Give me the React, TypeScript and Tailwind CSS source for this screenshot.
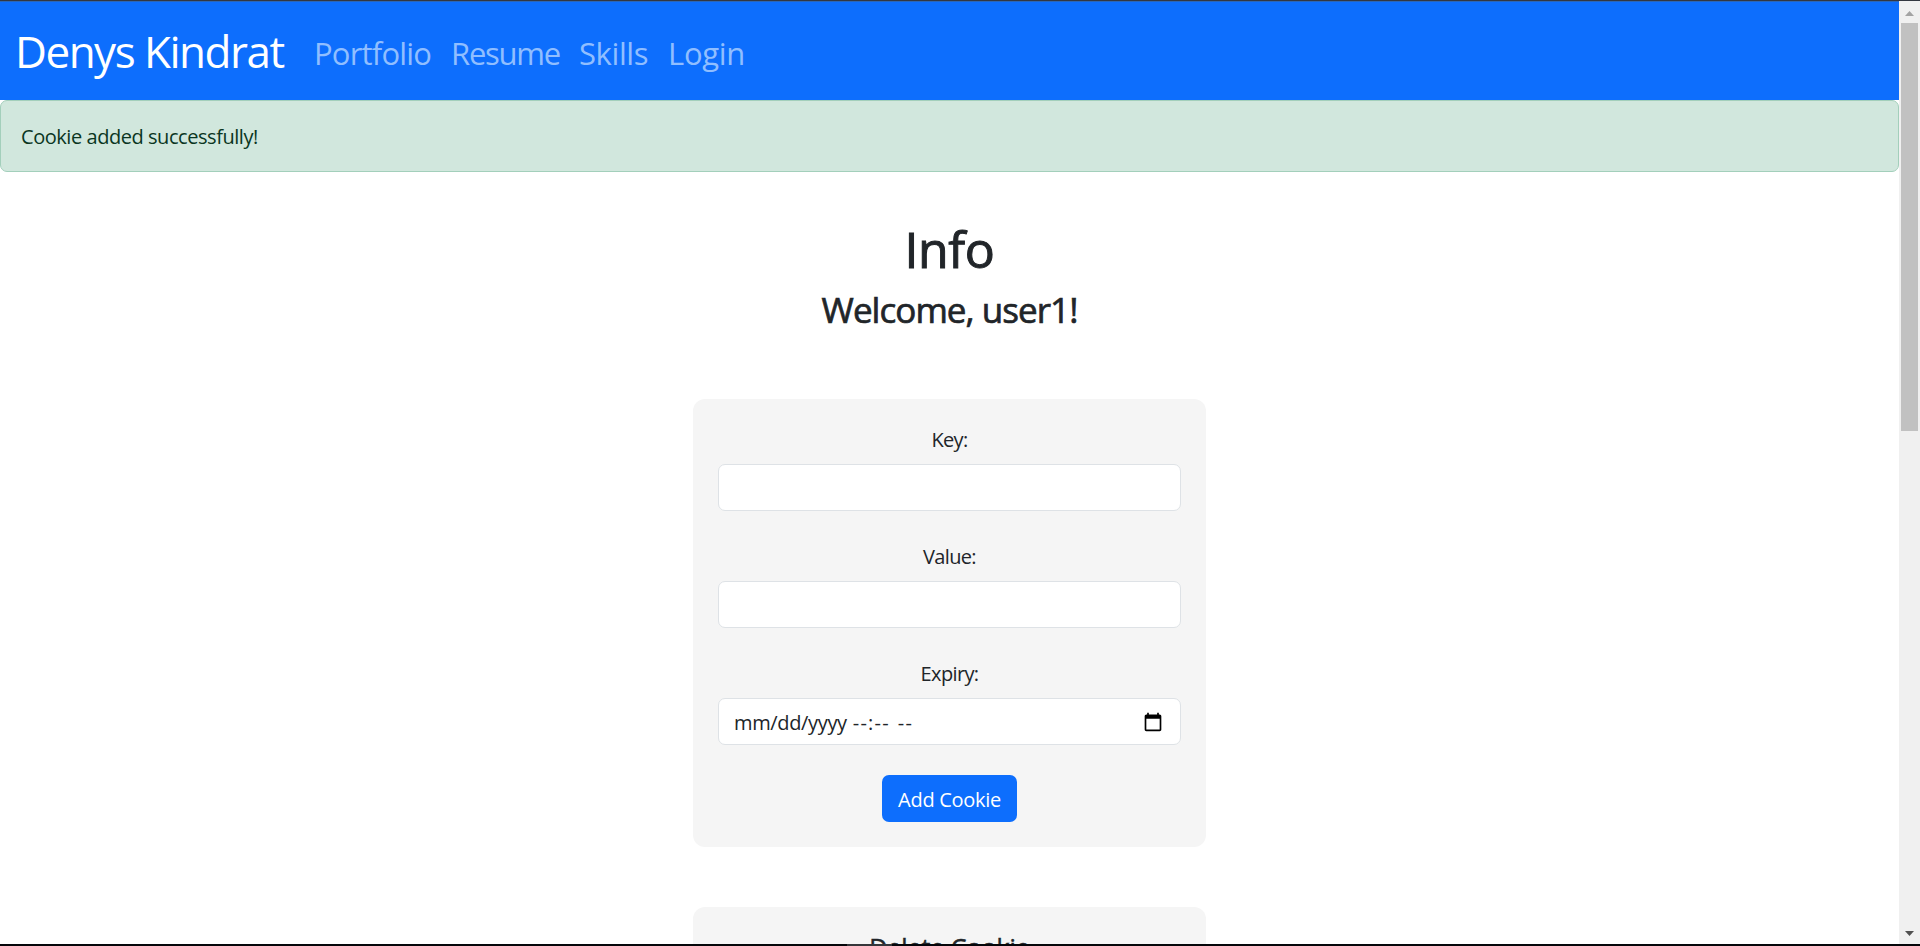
import React from "react";

const links = [
  { label: "Portfolio", cls: "ml-[31px] w-[118px] tracking-[-0.8px]" },
  { label: "Resume", cls: "ml-[19px] w-[110px] tracking-[-1.25px]" },
  { label: "Skills", cls: "ml-[18px] w-[68px] tracking-[-0.4px]" },
  { label: "Login", cls: "ml-[21px] w-[78px] tracking-[-0.3px]" },
];

function Field({ label, children }: { label: string; children?: React.ReactNode }) {
  return (
    <div className="mb-[30px] flex flex-col items-stretch">
      <label className="mb-[9px] mt-px h-[30px] text-center text-[20px] leading-[30px] tracking-[-0.65px]">{label}</label>
      <div className="flex h-[47px] items-center justify-between rounded-[7px] border border-[#dee2e6] bg-white pl-[15px] pr-[17px]">
        {children}
      </div>
    </div>
  );
}

export default function App() {
  return (
    <div className="flex h-[946px] w-[1920px] flex-col overflow-hidden bg-white font-['Open_Sans','Noto_Sans',sans-serif] text-[#212529]">
      <div className="h-px shrink-0 bg-[#333740]" />
      <div className="flex min-h-0 flex-1">
        <main className="flex min-w-0 flex-1 flex-col overflow-hidden">
          <nav className="flex h-[99px] shrink-0 items-center border-t border-[#2b66b8] bg-[#0d6efd] pl-[15px]">
            <a className="w-[268px] whitespace-nowrap text-[44px] leading-[66px] tracking-[-1.5px] text-white">Denys Kindrat</a>
            {links.map((l) => (
              <a key={l.label} className={"whitespace-nowrap pt-[3px] text-[31px] leading-[46px] text-[#90beff] " + l.cls}>
                {l.label}
              </a>
            ))}
          </nav>
          <div className="flex h-[72px] shrink-0 items-center rounded-[7px] border border-[#a3cfbb] bg-[#d1e7dd] px-[20px] pt-[2px] text-[20px] tracking-[-0.45px] text-[#0a3622]">
            Cookie added successfully!
          </div>
          <h1 className="mt-[47px] text-center text-[50px] font-medium leading-[60px] tracking-[-0.4px] [-webkit-text-stroke:1px_#212529]">Info</h1>
          <h2 className="mt-[10px] text-center text-[35px] font-medium leading-[42px] tracking-[-0.95px] [-webkit-text-stroke:0.7px_#212529]">Welcome, user1!</h2>
          <section className="mx-auto mt-[68px] flex h-[448px] w-[513px] shrink-0 flex-col rounded-[12px] bg-[#f5f5f5] px-[25px] pt-[25px]">
            <Field label="Key:" />
            <Field label="Value:" />
            <Field label="Expiry:">
              <span className="flex gap-[6px] pt-[2px] text-[20px] tracking-[-0.35px]">
                <span>mm/dd/yyyy</span>
                <span className="tracking-[1.2px]">--:--</span>
                <span className="ml-[2px] tracking-[1.2px]">--</span>
              </span>
              <svg width="20" height="20" viewBox="0 0 24 24">
                <path d="M20 3h-1V1h-2v2H7V1H5v2H4c-1.1 0-2 .9-2 2v16c0 1.1.9 2 2 2h16c1.1 0 2-.9 2-2V5c0-1.1-.9-2-2-2zm0 18H4V8h16v13z" />
              </svg>
            </Field>
            <button className="mx-auto h-[47px] w-[135px] rounded-[7px] bg-[#0d6efd] pt-[3px] text-[20px] tracking-[-0.3px] text-white">Add Cookie</button>
          </section>
          <section className="mx-auto mt-[60px] h-[200px] w-[513px] shrink-0 rounded-[12px] bg-[#f5f5f5] pt-[25px]">
            <h3 className="text-center text-[25px] font-medium leading-[30px] tracking-[-0.05px] [-webkit-text-stroke:0.5px_#212529]">Delete Cookie</h3>
          </section>
        </main>
        <aside className="flex w-[21px] shrink-0 flex-col items-center bg-[#f0f0f0]">
          <div className="flex h-[22px] w-full items-center justify-center pt-[2px]">
            <svg width="9" height="5" viewBox="0 0 9 5"><path d="M0 5L4.5 0L9 5Z" fill="#a3a3a3" /></svg>
          </div>
          <div className="h-[408px] w-[17px] bg-[#c1c1c1]" />
          <div className="mb-[8px] mt-auto">
            <svg className="block" width="9" height="5" viewBox="0 0 9 5"><path d="M0 0H9L4.5 5Z" fill="#505050" /></svg>
          </div>
        </aside>
      </div>
      <div className="flex h-[2px] shrink-0 bg-[#05060a]">
        <div className="ml-[847px] w-[45px] bg-[#35363a]" />
      </div>
    </div>
  );
}
